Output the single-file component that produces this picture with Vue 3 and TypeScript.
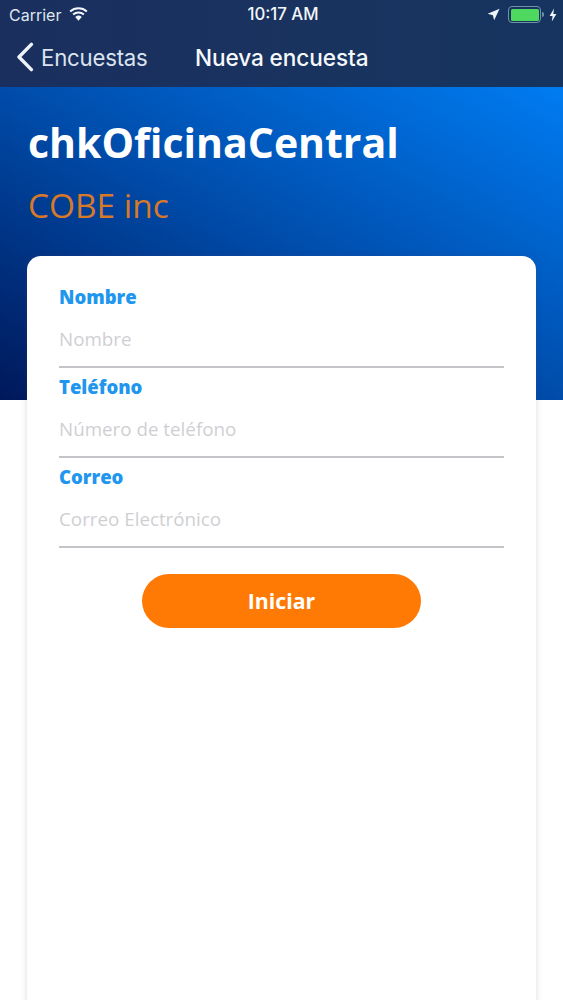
<script setup lang="ts">
interface Field { label: string; placeholder: string }
const fields: Field[] = [
  { label: 'Nombre', placeholder: 'Nombre' },
  { label: 'Teléfono', placeholder: 'Número de teléfono' },
  { label: 'Correo', placeholder: 'Correo Electrónico' },
]
</script>

<template>
  <div class="screen">
    <header class="top">
      <div class="status">
        <div class="status-left">
          <span>Carrier</span>
          <svg class="wifi" width="19" height="14" viewBox="0 0 18 13">
            <path d="M9 13 L5.9 9.3 A4.8 4.8 0 0 1 12.1 9.3 Z" fill="#f2f6fa" />
            <path d="M3.9 7 A7.7 7.7 0 0 1 14.1 7" fill="none" stroke="#f2f6fa" stroke-width="1.9" />
            <path d="M1.1 4.2 A11.8 11.8 0 0 1 16.9 4.2" fill="none" stroke="#f2f6fa" stroke-width="1.9" />
          </svg>
        </div>
        <span class="time">10:17 AM</span>
        <div class="status-right">
          <svg width="13" height="13" viewBox="0 0 12 12">
            <path d="M11.6 0.6 L0.6 5.4 L5.4 6.6 L6.6 11.4 Z" fill="#eef3f8" />
          </svg>
          <div class="battery"><div class="battery-fill"></div></div>
          <div class="battery-cap"></div>
          <svg width="8" height="14" viewBox="0 0 8 13">
            <path d="M5 0 L0.6 7.4 H3.6 L2.8 13 L7.4 5.4 H4.3 Z" fill="#f2f6fa" />
          </svg>
        </div>
      </div>
      <nav class="nav">
        <div class="back">
          <svg width="18" height="30" viewBox="0 0 18 30">
            <path d="M15.4 2.4 L3 15 L15.4 27.6" fill="none" stroke="#eef3f9" stroke-width="3.4" stroke-linecap="round" stroke-linejoin="round" />
          </svg>
          <span>Encuestas</span>
        </div>
        <span class="nav-title">Nueva encuesta</span>
      </nav>
    </header>

    <section class="hero">
      <h1>chkOficinaCentral</h1>
      <p>COBE inc</p>
    </section>

    <main class="card">
      <form class="form" @submit.prevent>
        <label v-for="f in fields" :key="f.label" class="field">
          <span class="label">{{ f.label }}</span>
          <input class="input" type="text" :placeholder="f.placeholder" />
        </label>
        <button class="start" type="submit">Iniciar</button>
      </form>
    </main>
  </div>
</template>

<style>
html, body { margin: 0; background: #fff; }
</style>

<style scoped>
.screen {
  width: 563px;
  height: 1000px;
  overflow: hidden;
  background: #fff;
  font-family: "Open Sans", sans-serif;
}
.top {
  height: 87px;
  box-sizing: border-box;
  background: linear-gradient(90deg, #1a2f5e 0%, #19335f 60%, #15345f 100%);
  color: #f2f6fa;
  font-family: Inter, "Liberation Sans", sans-serif;
}
.status {
  height: 29px;
  padding: 0 6px 0 9px;
  display: grid;
  grid-template-columns: 1fr auto 1fr;
  align-items: center;
  font-size: 16px;
}
.status-left { display: flex; align-items: center; gap: 8px; color: #dfe6ee; }
.wifi { margin-top: -2px; }
.time { font-size: 16.8px; font-weight: 500; margin-top: -1px; }
.status-right { display: flex; align-items: center; justify-content: flex-end; }
.battery {
  margin-left: 8px;
  width: 33px;
  height: 17px;
  box-sizing: border-box;
  border: 1.5px solid #6f93a4;
  border-radius: 4px;
  padding: 1.5px;
}
.battery-fill { height: 100%; background: #4fd860; border-radius: 1.5px; }
.battery-cap { width: 2px; height: 5px; margin: 0 5px 0 1px; background: #6f93a4; border-radius: 0 2px 2px 0; }
.nav {
  height: 58px;
  padding-left: 16px;
  display: flex;
  align-items: center;
  padding-bottom: 2px;
  box-sizing: border-box;
}
.back { display: flex; align-items: center; gap: 7px; width: 179px; color: #dbe4ee; font-weight: 400; }
.back span { font-size: 22.2px; letter-spacing: -0.2px; }
.nav-title { font-weight: 500; font-size: 22.6px; letter-spacing: -0.1px; color: #f6f9fc; }
.hero {
  height: 313px;
  box-sizing: border-box;
  padding: 28px 28px 0;
  background: linear-gradient(to bottom left, #007cf2 0%, #004caa 50%, #00185a 100%);
}
.hero h1 {
  margin: 0;
  color: #fff;
  font-size: 41px;
  line-height: 54px;
  font-weight: 700;
}
.hero p {
  margin: 13px 0 0;
  color: #d8792a;
  font-size: 33.4px;
  line-height: 46px;
  font-weight: 400;
}
.card {
  position: relative;
  margin: -144px 27px 0;
  height: 800px;
  box-sizing: border-box;
  padding: 26px 32px 0;
  background: #fff;
  border-radius: 14px 14px 0 0;
  box-shadow: 0 0 6px rgba(80, 60, 120, 0.2);
}
.form { display: flex; flex-direction: column; }
.field { display: flex; flex-direction: column; height: 90px; }
.label {
  color: #2196ee;
  font-size: 18.5px;
  line-height: 29px;
  font-weight: 800;
}
.input {
  height: 58px;
  padding: 2px 0 0;
  border: 0;
  border-bottom: 2px solid #c4c4c8;
  outline: 0;
  box-sizing: border-box;
  background: transparent;
  font: 400 18.8px "Open Sans", sans-serif;
  color: #333;
  margin-top: -1px;
}
.input::placeholder { color: #cfcfd3; opacity: 1; }
.start {
  align-self: center;
  width: 279px;
  height: 54px;
  margin-top: 22px;
  padding: 0 0 2px;
  border: 0;
  border-radius: 27px;
  background: #ff7a05;
  color: #fff;
  font: 700 21.3px "Open Sans", sans-serif;
}
</style>
